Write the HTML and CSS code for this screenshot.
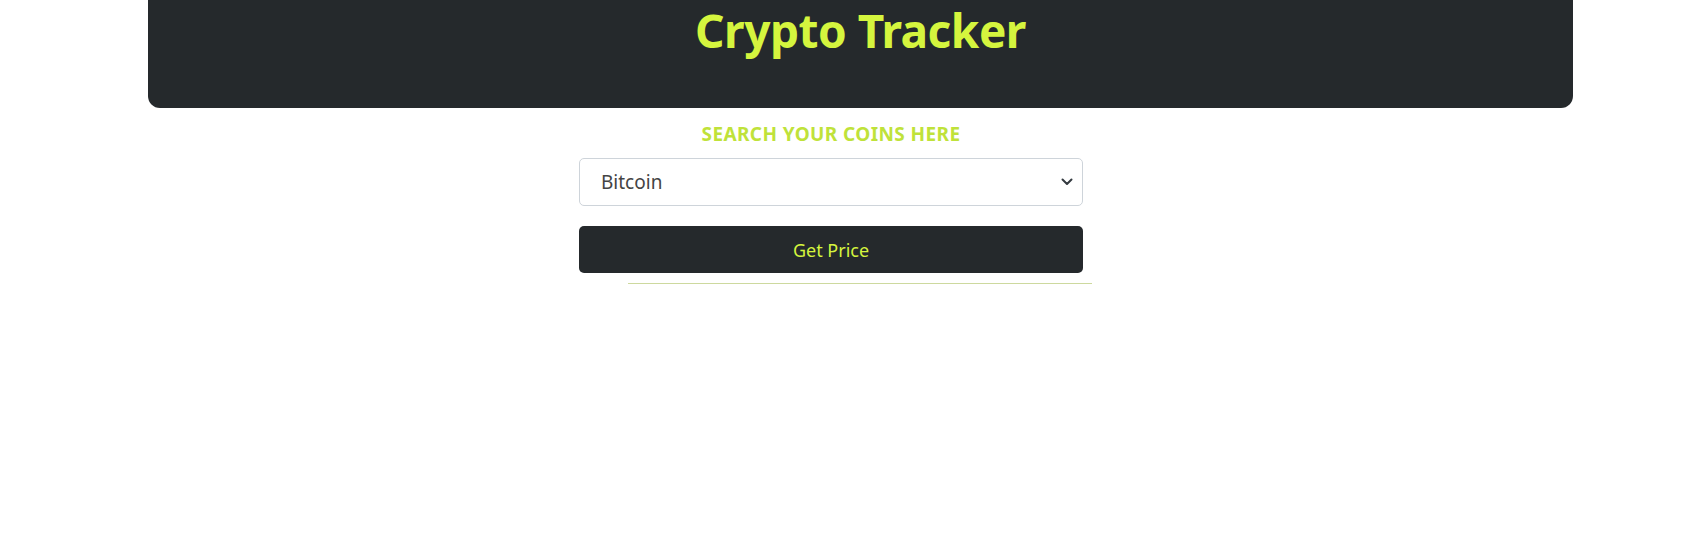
FILE: index.html
```html
<!DOCTYPE html>
<html lang="en">
<head>
<meta charset="utf-8">
<title>Crypto Tracker</title>
<link rel="stylesheet" href="styles.css">
</head>
<body>
  <header class="hero">
    <h1 class="hero-title">Crypto Tracker</h1>
  </header>
  <main class="search">
    <h2 class="search-label">SEARCH YOUR COINS HERE</h2>
    <div class="select">
      <span class="select-value">Bitcoin</span>
      <svg class="select-caret" width="12" height="8" viewBox="0 0 12 8"><path d="M1.5 1.5l4.5 4.5 4.5-4.5" fill="none" stroke="#343a40" stroke-width="2" stroke-linecap="round" stroke-linejoin="round"/></svg>
    </div>
    <button class="btn">Get Price</button>
  </main>
  <hr class="divider">
</body>
</html>
```
FILE: styles.css
```css
html, body {
  margin: 0;
  padding: 0;
  background: #fff;
  font-family: "Noto Sans", "Open Sans", sans-serif;
}
.hero {
  margin-left: 148px;
  width: 1425px;
  height: 108px;
  background: #25292c;
  border-radius: 0 0 12px 12px;
  display: flex;
  justify-content: center;
}
.hero-title {
  margin: 0;
  color: #d5f53e;
  font-size: 46px;
  font-weight: 700;
  line-height: 60px;
  letter-spacing: -0.5px;
}
.search {
  margin-left: 579px;
  width: 504px;
  display: flex;
  flex-direction: column;
}
.search-label {
  margin: 13px 0 0;
  text-align: center;
  color: #bfe23a;
  font-size: 19px;
  font-weight: 700;
  line-height: 26px;
  letter-spacing: 0.4px;
}
.select {
  margin-top: 11px;
  height: 48px;
  box-sizing: border-box;
  border: 1px solid #ced4da;
  border-radius: 5px;
  display: flex;
  align-items: center;
  justify-content: space-between;
  padding: 0 9px 0 21px;
}
.select-value {
  font-size: 19px;
  color: #444;
}
.btn {
  margin-top: 20px;
  height: 47px;
  border: 0;
  border-radius: 5px;
  background: #25292c;
  color: #d5f53e;
  font-family: inherit;
  font-size: 18px;
  padding: 0;
}
.divider {
  margin: 10px 0 0 628px;
  width: 464px;
  border: 0;
  height: 1px;
  background: #cdd99e;
}
```
